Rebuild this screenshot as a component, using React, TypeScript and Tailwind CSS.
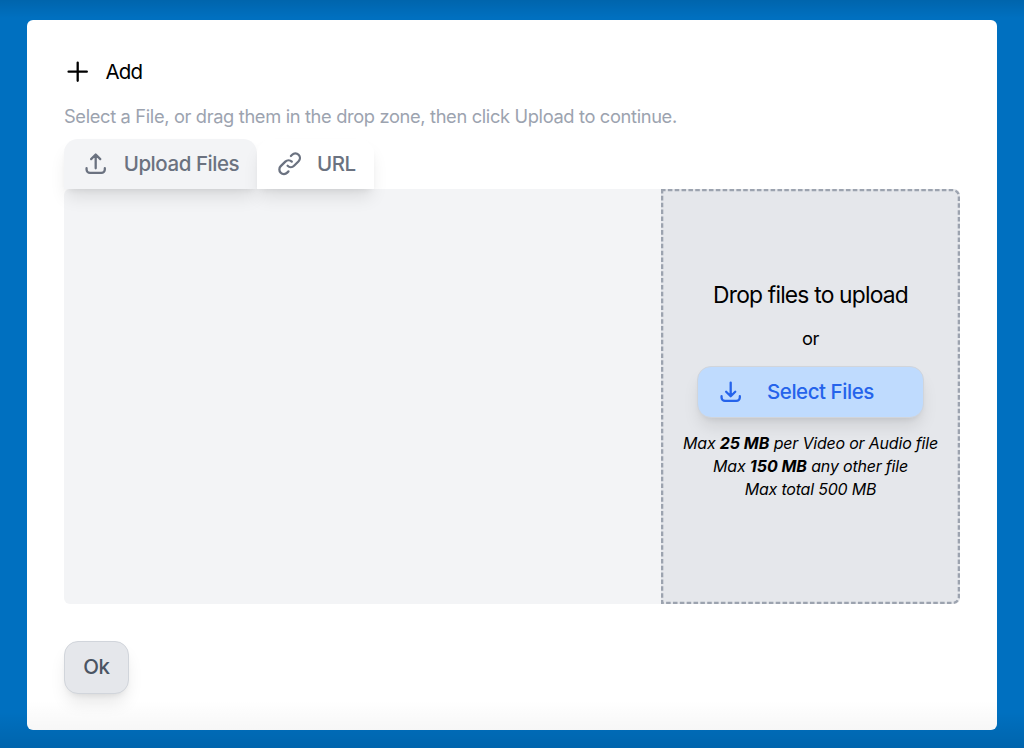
import type { ReactNode } from 'react';

const paths = {
  plus: 'M12 4v16m8-8H4',
  upload: 'M4 16v1a3 3 0 003 3h10a3 3 0 003-3v-1m-4-8l-4-4m0 0L8 8m4-4v12',
  download: 'M4 16v1a3 3 0 003 3h10a3 3 0 003-3v-1m-4-4l-4 4m0 0l-4-4m4 4V4',
  link: 'M13.828 10.172a4 4 0 00-5.656 0l-4 4a4 4 0 105.656 5.656l1.102-1.101m-.758-4.899a4 4 0 005.656 0l4-4a4 4 0 00-5.656-5.656l-1.1 1.1',
};

function Icon({ name, className }: { name: keyof typeof paths; className: string }) {
  return (
    <svg
      viewBox="0 0 24 24"
      fill="none"
      stroke="currentColor"
      strokeLinecap="round"
      strokeLinejoin="round"
      className={`size-[27.4px] shrink-0 stroke-2 ${className}`}
    >
      <path d={paths[name]} />
    </svg>
  );
}

function Tab({ className, children }: { className: string; children: ReactNode }) {
  return (
    <button
      className={`flex h-[50px] items-center whitespace-nowrap rounded-t-[14px] pl-[18.3px] text-[20.5px] font-medium text-[#6b7280] shadow-[0_11px_17px_-3px_rgba(0,0,0,0.1),0_4px_7px_-4px_rgba(0,0,0,0.1)] ${className}`}
    >
      {children}
    </button>
  );
}

export default function App() {
  return (
    <div className="h-[748px] w-full overflow-hidden bg-[#0070c0] bg-[linear-gradient(to_bottom,rgba(0,0,0,0.1)_0px,transparent_18px,transparent_712px,rgba(0,0,0,0.1)_748px)] px-[27.4px] pt-[19.5px] font-['Inter','Liberation_Sans',sans-serif] text-black">
      <main className="flex h-[710px] flex-col rounded-md bg-white bg-[linear-gradient(to_bottom,transparent_680px,rgba(0,0,0,0.03)_710px)] px-[36.6px] pt-[37.5px]">
        <h1 className="flex h-[30px] items-center text-[20.5px] leading-[30px]">
          <Icon name="plus" className="" />
          <span className="ml-[14px] tracking-[-0.8px]">Add</span>
        </h1>
        <p className="mt-[15px] h-7 whitespace-nowrap text-[18.3px] leading-7 tracking-[-0.35px] text-[#9ca3af]">
          Select a File, or drag them in the drop zone, then click Upload to continue.
        </p>
        <div className="relative mt-[9px] flex">
          <Tab className="w-[193.4px] bg-[#f3f4f6]">
            <Icon name="upload" className="" />
            <span className="ml-[14px] tracking-[-0.45px]">Upload Files</span>
          </Tab>
          <Tab className="w-[116.6px] bg-white">
            <Icon name="link" className="" />
            <span className="ml-[14px] tracking-[-0.5px]">URL</span>
          </Tab>
        </div>
        <section className="flex h-[415px] rounded-md bg-[#f3f4f6]">
          <div className="flex-1" />
          <div className="relative flex w-[299px] flex-col items-center rounded-r-md bg-[#e5e7eb] pt-[90px]">
            <svg viewBox="0 0 299 415" fill="none" className="absolute inset-0 size-full">
              <path
                d="M0 1.15H292A5.85 5.85 0 01297.85 7V408A5.85 5.85 0 01292 413.85H0M1.15 0V415"
                stroke="#9ca3af"
                strokeWidth="2.3"
                strokeDasharray="4.55 2.3"
              />
            </svg>
            <h2 className="h-8 whitespace-nowrap text-[22.8px] leading-8 tracking-[-0.8px]">
              Drop files to upload
            </h2>
            <p className="mt-[13px] h-7 text-[18.3px] leading-7 tracking-[-0.3px]">or</p>
            <button className="relative mt-[14px] flex h-[52px] w-[227px] items-center whitespace-nowrap rounded-[14px] border border-[#d1d5db] bg-[#bfdbfe] pl-[18.6px] text-[20.5px] font-medium text-[#2563eb] shadow-[0_11px_17px_-3px_rgba(0,0,0,0.1),0_4px_7px_-4px_rgba(0,0,0,0.1)]">
              <Icon name="download" className="" />
              <span className="ml-[23px] tracking-[-0.45px]">Select Files</span>
            </button>
            <div className="mt-[14px] whitespace-nowrap text-center text-[16px] italic leading-[23px] tracking-[-0.2px]">
              <p>
                Max <b className="tracking-[0px]">25 MB</b> per Video or Audio file
              </p>
              <p>
                Max <b className="tracking-[0px]">150 MB</b> any other file
              </p>
              <p>Max total 500 MB</p>
            </div>
          </div>
        </section>
        <button className="mt-[37px] flex h-[53px] w-[65px] items-center justify-center rounded-[14px] border border-[#d1d5db] bg-[#e5e7eb] text-[20.5px] font-medium tracking-[-0.4px] text-[#4b5563] shadow-[0_11px_17px_-3px_rgba(0,0,0,0.1),0_4px_7px_-4px_rgba(0,0,0,0.1)]">
          Ok
        </button>
      </main>
    </div>
  );
}
